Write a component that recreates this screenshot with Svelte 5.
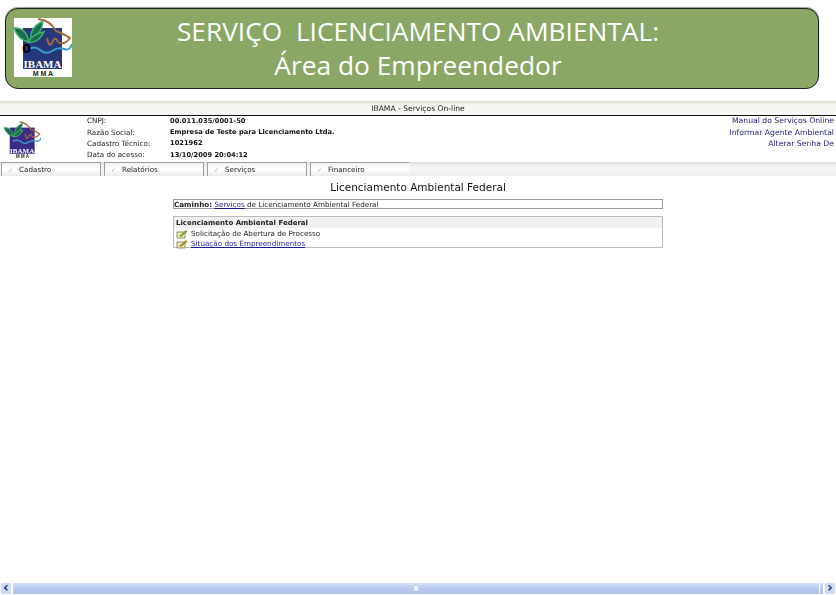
<script>
  const info = [
    ["CNPJ:", "00.011.035/0001-50"],
    ["Razão Social:", "Empresa de Teste para Licenciamento Ltda."],
    ["Cadastro Técnico:", "1021962"],
    ["Data do acesso:", "13/10/2009 20:04:12"]
  ];
  const links = ["Manual do Serviços Online", "Informar Agente Ambiental", "Alterar Senha De"];
  const tabs = ["Cadastro", "Relatórios", "Serviços", "Financeiro"];
</script>

{#snippet logo(cls)}
  <svg class={cls} viewBox="0 0 58 59" aria-hidden="true">
    <rect width="58" height="59" fill="#fff" />
    <rect class="square" x="9" y="10" width="39" height="41" />
    <path d="M0 10 Q12 9 15 24 Q4 22 0 10Z" class="leaf" />
    <path d="M29 3 Q28 16 17 22 Q15 10 29 3Z" class="leaf" />
    <path d="M30 14 Q24 26 14 24 Q20 15 30 14Z" class="leaf" />
    <path d="M24 1 Q36 2 42 13 Q48 15 56 20 Q50 28 44 24 Q41 17 38 25 Q35 30 33 20" fill="none" stroke="#a5683f" stroke-width="2" />
    <path d="M14 32 Q20 27 26 32 T38 33 T50 31 T58 26" fill="none" stroke="#3aa0d0" stroke-width="2" />
    <text x="28.5" y="50" class="logo-name">IBAMA</text>
    <text x="29" y="58" class="logo-mma">M M A</text>
  </svg>
{/snippet}

{#snippet pencil(color)}
  <svg class="row-icon" viewBox="0 0 12 10" aria-hidden="true">
    <path d="M1 3H9V9H1Z" fill="#f1eeb4" stroke="#77744a" stroke-width="0.8" />
    <path d="M3 7 L10 1 L11.5 2.5 L5 8Z" fill={color} />
  </svg>
{/snippet}

<div class="page">
  <header class="banner">
    <div class="banner-logo">
      {@render logo("big-logo")}
      <span class="zero">0</span>
    </div>
    <h1>SERVIÇO&nbsp; LICENCIAMENTO AMBIENTAL:<br />Área do Empreendedor</h1>
  </header>

  <section class="shot">
    <div class="shot-title">IBAMA - Serviços On-line</div>
    <div class="shot-head">
      {@render logo("small-logo")}
      <div class="info">
        {#each info as [label, value]}
          <span class="label">{label}</span>
          <span class="value">{value}</span>
        {/each}
      </div>
      <div class="links">
        {#each links as link}
          <span>{link}</span>
        {/each}
      </div>
    </div>
    <nav class="tabs">
      {#each tabs as tab}
        <div class="tab"><i>✓</i>{tab}</div>
      {/each}
    </nav>

    <div class="content">
      <h2>Licenciamento Ambiental Federal</h2>
      <div class="crumb"><b>Caminho:</b> <a href="#top">Serviços</a> de Licenciamento Ambiental Federal</div>
      <div class="panel">
        <div class="panel-title">Licenciamento Ambiental Federal</div>
        <div class="panel-row">{@render pencil("#7d9a3a")}<span>Solicitação de Abertura de Processo</span></div>
        <div class="panel-row">{@render pencil("#a58a3a")}<a href="#top">Situação dos Empreendimentos</a></div>
      </div>
    </div>
  </section>

  <footer class="scrollbar">
    <div class="arrow">‹</div>
    <div class="track"><span class="grip"></span></div>
    <div class="track-end"></div>
    <div class="arrow">›</div>
  </footer>
</div>

<style>
  :global(body) {
    margin: 0;
    background: #fff;
  }

  .page {
    width: 836px;
    height: 595px;
    display: flex;
    flex-direction: column;
    overflow: hidden;
    background: #fff;
    font-family: "DejaVu Sans", sans-serif;
  }

  .banner {
    margin: 8px 17px 0 5px;
    height: 79px;
    flex: none;
    display: flex;
    align-items: center;
    background: #8aa766;
    border: 1px solid #1c2218;
    border-radius: 13px;
    box-shadow: 0 -1px 1px #9aa091;
  }

  .banner-logo {
    position: relative;
    margin: 0 0 3px 8px;
    width: 58px;
    height: 59px;
    flex: none;
  }

  .big-logo {
    display: block;
    width: 58px;
    height: 59px;
  }

  .zero {
    position: absolute;
    left: 8px;
    top: 24px;
    font-size: 13px;
    font-weight: bold;
    line-height: 13px;
    color: #000;
  }

  .square {
    fill: #25387c;
  }

  .small-logo .square {
    fill: #3b2a86;
  }

  .leaf {
    fill: #1d6b4e;
    stroke: #3fb56f;
    stroke-width: 1.5;
  }

  .logo-name {
    font-family: "Liberation Serif", serif;
    font-size: 11px;
    font-weight: bold;
    fill: #fff;
    text-anchor: middle;
  }

  .logo-mma {
    font-family: "Liberation Sans", sans-serif;
    font-size: 7px;
    font-weight: bold;
    fill: #222;
    text-anchor: middle;
  }

  h1 {
    margin: 0 0 2px 98px;
    width: 496px;
    font-size: 26.3px;
    font-weight: normal;
    line-height: 34px;
    text-align: center;
    white-space: nowrap;
    color: #fff;
    font-family: "Open Sans", sans-serif;
  }

  .shot {
    margin-top: 12px;
    flex: 1;
    min-height: 0;
    color: #222;
    font-size: 7.2px;
    filter: blur(0.35px);
  }

  .shot-title {
    height: 14px;
    line-height: 16px;
    text-align: center;
    font-size: 7.6px;
    color: #222;
    background: linear-gradient(#d8d8ce, #f4f4f0 25%, #f7f7f5);
    border-bottom: 1px solid #111;
  }

  .shot-head {
    height: 46px;
    display: flex;
    background: #fff;
  }

  .small-logo {
    display: block;
    margin: 4px 0 0 4px;
    width: 37px;
    height: 40px;
    flex: none;
  }

  .info {
    margin: -1px 0 0 46px;
    display: grid;
    grid-template-columns: 83px auto;
    grid-auto-rows: 11.4px;
    align-items: center;
    white-space: nowrap;
  }

  .value {
    font-size: 6.7px;
    font-weight: bold;
    color: #111;
  }

  .links {
    flex: 1;
    margin: -1px 2px 0 0;
    display: grid;
    grid-auto-rows: 11.4px;
    align-items: center;
    justify-items: end;
    font-size: 7.7px;
    color: #1a1a70;
    white-space: nowrap;
  }

  .tabs {
    height: 14px;
    padding-left: 1px;
    display: flex;
    gap: 3px;
    background: linear-gradient(#dedede, #f7f7f7 35%, #eeeeee);
  }

  .tab {
    width: 98px;
    line-height: 14px;
    border: 1px solid #9c9c9c;
    border-bottom: 0;
    background: linear-gradient(#f2f2f2, #fff 50%, #ebebeb);
  }

  .tab:last-child {
    border-right: 0;
  }

  .tab i {
    margin: 0 6px;
    font-size: 6px;
    font-style: normal;
    color: #aaa;
  }

  .content {
    padding: 6px 173px 0;
    background: #fff;
  }

  h2 {
    margin: 0 0 6px;
    font-size: 10.5px;
    line-height: 11px;
    font-weight: normal;
    text-align: center;
    color: #111;
  }

  .crumb {
    width: 488px;
    height: 8px;
    line-height: 9px;
    border: 1px solid #9a9a9a;
    white-space: nowrap;
  }

  a {
    color: #1a1a90;
  }

  .panel {
    margin-top: 7px;
    width: 488px;
    height: 30px;
    border: 1px solid #bbb;
  }

  .panel-title {
    height: 11px;
    line-height: 12px;
    padding-left: 2px;
    font-size: 7px;
    font-weight: bold;
    background: #f1f1f1;
  }

  .panel-row {
    height: 9px;
    margin-top: 1px;
    padding-left: 2px;
    display: flex;
    align-items: center;
    gap: 3px;
    line-height: 9px;
  }

  .row-icon {
    width: 12px;
    height: 10px;
    flex: none;
  }

  .scrollbar {
    height: 11px;
    margin-bottom: 1px;
    flex: none;
    display: flex;
    align-items: stretch;
    gap: 1px;
  }

  .arrow {
    width: 10px;
    margin: 0 1px;
    text-align: center;
    font-size: 14px;
    font-weight: bold;
    line-height: 8px;
    color: #1d3580;
    background: #cfdcf6;
  }

  .track {
    flex: 1;
    display: flex;
    align-items: center;
    justify-content: center;
    background: linear-gradient(#d3def7, #b9caf1 50%, #aebfe9);
  }

  .track-end {
    width: 3px;
    background: linear-gradient(#d3def7, #b9caf1 50%, #aebfe9);
  }

  .grip {
    width: 4px;
    height: 5px;
    background: #eef2fc;
  }
</style>
